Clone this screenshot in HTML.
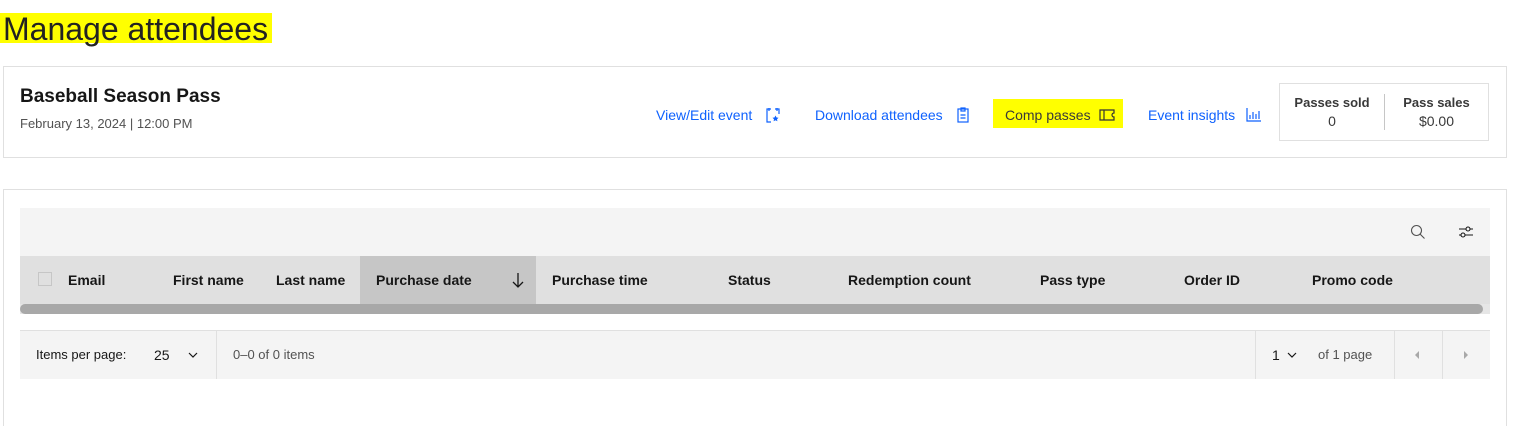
<!DOCTYPE html>
<html><head><meta charset="utf-8"><style>
*{box-sizing:border-box;margin:0;padding:0}
html,body{width:1522px;height:426px;overflow:hidden}
body{background:#fff;font-family:"Liberation Sans",sans-serif;color:#161616;position:relative}
.a{position:absolute;white-space:nowrap}
.hl{background:#ffff00}
.link{color:#0f62fe;font-size:14px}
.th{font-weight:bold;font-size:14px;top:272px}
</style></head><body>
<div class="a hl" style="left:0;top:13px;width:272px;height:30px"></div>
<div class="a" style="left:3px;top:11px;font-size:32px;line-height:36px;color:#222">Manage attendees</div>

<div class="a" style="left:3px;top:66px;width:1504px;height:92px;border:1px solid #e0e0e0"></div>
<div class="a" style="left:20px;top:86px;font-size:19px;font-weight:bold">Baseball Season Pass</div>
<div class="a" style="left:20px;top:116px;font-size:13px;color:#525252">February 13, 2024 | 12:00 PM</div>

<div class="a link" style="left:656px;top:107px">View/Edit event</div>
<svg class="a" style="left:766px;top:107px" width="14" height="16" viewBox="0 0 14 16" fill="none" stroke="#0f62fe" stroke-width="1.2"><path d="M5 2H1v13h4M9 2h4v5M3 1v3M11 1v3"/><path d="M9.5 8.5l1 2 2 .3-1.5 1.4.4 2-1.9-1-1.9 1 .4-2-1.5-1.4 2-.3z" fill="#0f62fe" stroke="none"/></svg>
<div class="a link" style="left:815px;top:107px">Download attendees</div>
<svg class="a" style="left:957px;top:107px" width="12" height="16" viewBox="0 0 12 16" fill="none" stroke="#0f62fe" stroke-width="1.2"><rect x="1" y="2" width="10" height="13"/><rect x="4" y="1" width="4" height="3"/><path d="M3.5 8h5M3.5 11h5"/></svg>
<div class="a hl" style="left:993px;top:99px;width:130px;height:29px"></div>
<div class="a" style="left:1005px;top:107px;font-size:14px;color:#3a3a3a">Comp passes</div>
<svg class="a" style="left:1099px;top:109px" width="16" height="12" viewBox="0 0 16 12" fill="none" stroke="#333" stroke-width="1.2"><path d="M1 1h14v3a2 2 0 0 0 0 4v3H1z M5 1v10"/></svg>
<div class="a link" style="left:1148px;top:107px">Event insights</div>
<svg class="a" style="left:1246px;top:108px" width="15" height="14" viewBox="0 0 15 14" fill="none" stroke="#0f62fe" stroke-width="1.2"><path d="M1 0v13h14M4 11V7M7 11V4M10 11V6M13 11V3"/></svg>

<div class="a" style="left:1279px;top:83px;width:210px;height:58px;border:1px solid #e0e0e0"></div>
<div class="a" style="left:1384px;top:94px;width:1px;height:36px;background:#c6c6c6"></div>
<div class="a" style="left:1280px;top:95px;width:104px;text-align:center;font-size:13px;font-weight:bold;color:#393939">Passes sold</div>
<div class="a" style="left:1280px;top:113px;width:104px;text-align:center;font-size:14px;color:#393939">0</div>
<div class="a" style="left:1385px;top:95px;width:103px;text-align:center;font-size:13px;font-weight:bold;color:#393939">Pass sales</div>
<div class="a" style="left:1385px;top:113px;width:103px;text-align:center;font-size:14px;color:#393939">$0.00</div>

<div class="a" style="left:3px;top:189px;width:1504px;height:245px;border:1px solid #e0e0e0"></div>
<div class="a" style="left:20px;top:208px;width:1470px;height:48px;background:#f4f4f4"></div>
<svg class="a" style="left:1410px;top:224px" width="16" height="16" viewBox="0 0 16 16" fill="none" stroke="#525252" stroke-width="1.1"><circle cx="6.5" cy="6.5" r="5"/><path d="M10 10l4.5 4.5"/></svg>
<svg class="a" style="left:1458px;top:224px" width="16" height="16" viewBox="0 0 16 16" fill="none" stroke="#161616" stroke-width="1.1"><path d="M1 5h14M1 11h14"/><circle cx="10" cy="5" r="2" fill="#f4f4f4"/><circle cx="5" cy="11" r="2" fill="#f4f4f4"/></svg>

<div class="a" style="left:20px;top:256px;width:1470px;height:48px;background:#e0e0e0"></div>
<div class="a" style="left:360px;top:256px;width:176px;height:48px;background:#c6c6c6"></div>
<div class="a" style="left:38px;top:272px;width:14px;height:14px;border:1px solid #c6c6c6;background:#e0e0e0"></div>
<div class="a th" style="left:68px">Email</div>
<div class="a th" style="left:173px">First name</div>
<div class="a th" style="left:276px">Last name</div>
<div class="a th" style="left:376px">Purchase date</div>
<svg class="a" style="left:511px;top:272px" width="14" height="16" viewBox="0 0 14 16" fill="none" stroke="#161616" stroke-width="1.3"><path d="M7 1v14M2 10l5 5 5-5"/></svg>
<div class="a th" style="left:552px">Purchase time</div>
<div class="a th" style="left:728px">Status</div>
<div class="a th" style="left:848px">Redemption count</div>
<div class="a th" style="left:1040px">Pass type</div>
<div class="a th" style="left:1184px">Order ID</div>
<div class="a th" style="left:1312px">Promo code</div>
<div class="a" style="left:20px;top:304px;width:1470px;height:10px;background:#e6e6e6"></div>
<div class="a" style="left:20px;top:304px;width:1463px;height:10px;background:#a8a8a8;border-radius:5px"></div>

<div class="a" style="left:20px;top:330px;width:1470px;height:49px;background:#f4f4f4;border-top:1px solid #e0e0e0"></div>
<div class="a" style="left:216px;top:331px;width:1px;height:48px;background:#e0e0e0"></div>
<div class="a" style="left:1255px;top:331px;width:1px;height:48px;background:#e0e0e0"></div>
<div class="a" style="left:1394px;top:331px;width:1px;height:48px;background:#e0e0e0"></div>
<div class="a" style="left:1442px;top:331px;width:1px;height:48px;background:#e0e0e0"></div>
<div class="a" style="left:36px;top:347px;font-size:13px">Items per page:</div>
<div class="a" style="left:154px;top:347px;font-size:14px">25</div>
<svg class="a" style="left:187px;top:350px" width="12" height="10" viewBox="0 0 12 10" fill="none" stroke="#161616" stroke-width="1.2"><path d="M2 3l4 4 4-4"/></svg>
<div class="a" style="left:233px;top:347px;font-size:13px;color:#525252">0–0 of 0 items</div>
<div class="a" style="left:1272px;top:347px;font-size:14px">1</div>
<svg class="a" style="left:1286px;top:350px" width="12" height="10" viewBox="0 0 12 10" fill="none" stroke="#161616" stroke-width="1.2"><path d="M2 3l4 4 4-4"/></svg>
<div class="a" style="left:1318px;top:347px;font-size:13px;color:#525252">of 1 page</div>
<svg class="a" style="left:1413px;top:350px" width="8" height="10"><path d="M6 1L2 5l4 4z" fill="#a8a8a8"/></svg>
<svg class="a" style="left:1462px;top:350px" width="8" height="10"><path d="M2 1l4 4-4 4z" fill="#a8a8a8"/></svg>
</body></html>
